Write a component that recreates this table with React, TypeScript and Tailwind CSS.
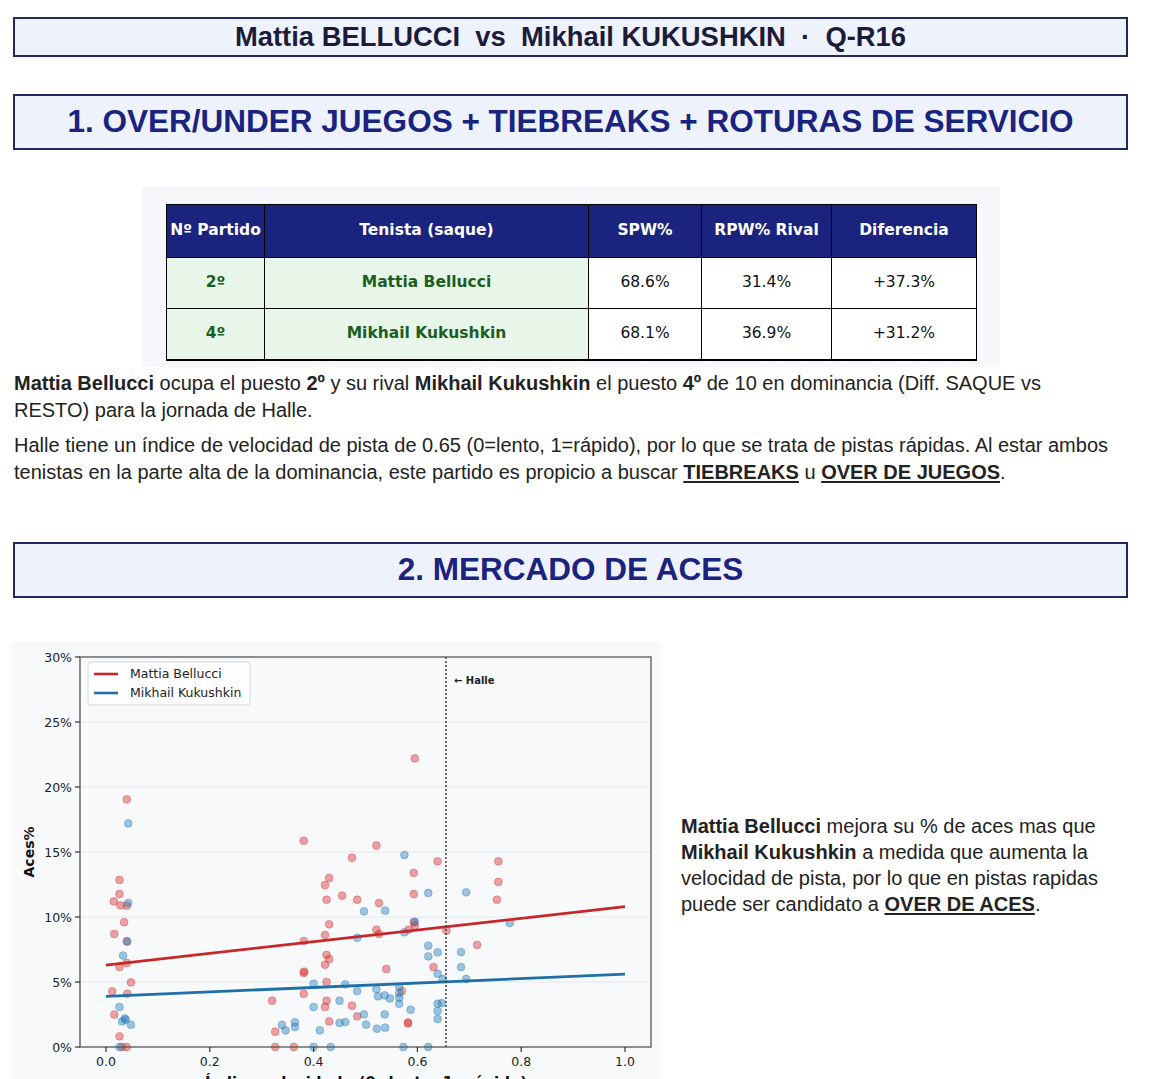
import React from "react";

const RED = "#d62728";
const BLUE = "#1f77b4";

const X = (v: number) => 94 + 519 * v;
const Y = (p: number) => 405 - 13 * p;

const redPts: [number, number][] = [
  [0.04, 19.05], [0.595, 22.2], [0.026, 12.85], [0.026, 11.77], [0.015, 11.2], [0.028, 10.9],
  [0.04, 10.87], [0.035, 9.6], [0.016, 8.7], [0.04, 8.15], [0.026, 6.15], [0.04, 6.46],
  [0.048, 4.97], [0.012, 4.28], [0.041, 4.1], [0.016, 2.49], [0.026, 0.82], [0.031, 0], [0.04, 0],
  [0.381, 15.87], [0.521, 15.5], [0.474, 14.56], [0.639, 14.28], [0.756, 14.28], [0.593, 13.4],
  [0.43, 13.0], [0.422, 12.46], [0.756, 12.7], [0.455, 11.64], [0.593, 11.77], [0.484, 11.33],
  [0.425, 11.33], [0.526, 11.08], [0.753, 11.33], [0.43, 9.44], [0.593, 9.6], [0.595, 9.33],
  [0.521, 9.03], [0.526, 8.7], [0.583, 9.03], [0.656, 8.97], [0.422, 8.62], [0.381, 8.15],
  [0.715, 7.85], [0.425, 7.08], [0.43, 6.77], [0.422, 6.33], [0.631, 6.15], [0.54, 6.0],
  [0.381, 5.7], [0.382, 5.8], [0.425, 5.0], [0.57, 4.3], [0.32, 3.56], [0.381, 4.1], [0.425, 3.56],
  [0.474, 3.18], [0.422, 3.08], [0.484, 2.36], [0.43, 1.97], [0.582, 1.8], [0.582, 1.9],
  [0.326, 1.18], [0.326, 0], [0.362, 0],
];

const bluePts: [number, number][] = [
  [0.043, 17.2], [0.043, 11.08], [0.041, 8.1], [0.033, 7.03], [0.026, 3.08], [0.036, 2.2],
  [0.038, 2.1], [0.031, 1.97], [0.048, 1.72], [0.026, 0], [0.575, 14.77], [0.621, 11.85],
  [0.694, 11.9], [0.497, 10.44], [0.538, 10.49], [0.595, 9.64], [0.575, 8.82], [0.484, 8.4],
  [0.778, 9.54], [0.621, 7.79], [0.621, 6.97], [0.639, 7.28], [0.684, 7.3], [0.684, 6.15],
  [0.639, 5.64], [0.649, 5.23], [0.694, 5.23], [0.4, 4.87], [0.461, 4.82], [0.484, 4.3],
  [0.521, 4.46], [0.565, 4.62], [0.565, 4.15], [0.524, 3.9], [0.537, 3.97], [0.547, 3.74],
  [0.565, 3.8], [0.565, 3.33], [0.639, 3.33], [0.647, 3.38], [0.4, 3.08], [0.45, 3.56],
  [0.587, 2.87], [0.639, 2.77], [0.497, 2.51], [0.537, 2.51], [0.639, 2.15], [0.364, 1.9],
  [0.339, 1.7], [0.364, 1.54], [0.346, 1.28], [0.412, 1.28], [0.45, 1.85], [0.461, 1.92],
  [0.501, 1.72], [0.522, 1.41], [0.538, 1.49], [0.4, 0], [0.433, 0], [0.573, 0], [0.621, 0],
];

function AcesChart() {
  const font = "'DejaVu Sans', sans-serif";
  return (
    <svg width="648" height="450" viewBox="0 0 648 450" className="block shrink-0" style={{ fontFamily: font }}>
      <rect x="0" y="0" width="648" height="450" fill="#f7f9fb" />
      {[5, 10, 15, 20, 25].map((p) => (
        <line key={p} x1="68" x2="639" y1={Y(p)} y2={Y(p)} stroke="#e6e9ee" strokeWidth="1.2" />
      ))}
      {redPts.map(([x, y], i) => (
        <circle key={"r" + i} cx={X(x)} cy={Y(y)} r="3.9" fill={RED} fillOpacity="0.42" stroke={RED} strokeOpacity="0.35" />
      ))}
      {bluePts.map(([x, y], i) => (
        <circle key={"b" + i} cx={X(x)} cy={Y(y)} r="3.9" fill={BLUE} fillOpacity="0.42" stroke={BLUE} strokeOpacity="0.35" />
      ))}
      <line x1={X(0)} y1={Y(6.3)} x2={X(1)} y2={Y(10.8)} stroke="#c62828" strokeWidth="2.8" />
      <line x1={X(0)} y1={Y(3.9)} x2={X(1)} y2={Y(5.6)} stroke="#1f6fa8" strokeWidth="2.8" />
      <line x1={X(0.655)} y1="15" x2={X(0.655)} y2="405" stroke="#333" strokeWidth="1.4" strokeDasharray="2 2" />
      <text x={X(0.655) + 8} y="42" fontSize="10" fontWeight="bold" fill="#222">← Halle</text>
      <rect x="68" y="15" width="571" height="390" fill="none" stroke="#555" strokeWidth="1.3" />
      {[0, 5, 10, 15, 20, 25, 30].map((p) => (
        <g key={p}>
          <line x1="63" x2="68" y1={Y(p)} y2={Y(p)} stroke="#333" strokeWidth="1.2" />
          <text x="60" y={Y(p) + 4.5} fontSize="12.5" textAnchor="end" fill="#222">{p}%</text>
        </g>
      ))}
      {[0, 0.2, 0.4, 0.6, 0.8, 1.0].map((v) => (
        <g key={v}>
          <line x1={X(v)} x2={X(v)} y1="405" y2="410" stroke="#333" strokeWidth="1.2" />
          <text x={X(v)} y="424" fontSize="12.5" textAnchor="middle" fill="#222">{v.toFixed(1)}</text>
        </g>
      ))}
      <text transform="translate(22 210) rotate(-90)" fontSize="14" fontWeight="bold" textAnchor="middle" fill="#111">Aces%</text>
      <text x="354" y="446" fontSize="15" fontWeight="bold" textAnchor="middle" fill="#111">Índice velocidad · (0=lento, 1=rápido)</text>
      <rect x="76" y="20" width="162" height="43" rx="3" fill="#ffffff" fillOpacity="0.85" stroke="#d4d7dc" />
      <line x1="82" x2="106" y1="32" y2="32" stroke="#c62828" strokeWidth="2.6" />
      <text x="118" y="36" fontSize="12.5" fill="#222">Mattia Bellucci</text>
      <line x1="82" x2="106" y1="51" y2="51" stroke="#1f6fa8" strokeWidth="2.6" />
      <text x="118" y="55" fontSize="12.5" fill="#222">Mikhail Kukushkin</text>
    </svg>
  );
}

const rows = [
  { n: "2º", name: "Mattia Bellucci", spw: "68.6%", rpw: "31.4%", diff: "+37.3%" },
  { n: "4º", name: "Mikhail Kukushkin", spw: "68.1%", rpw: "36.9%", diff: "+31.2%" },
];

function DominanceTable() {
  return (
    <div className="ml-[129px] w-[858px] bg-[#f5f7fa] pt-[17px] pb-[6px] pl-[24px]">
      <table className="border-collapse text-[15.5px] font-['DejaVu_Sans',sans-serif] border-b-2 border-black">
        <thead>
          <tr className="h-[53px] bg-[#1a237e] text-white font-bold">
            <th className="w-[98px] border border-black">Nº Partido</th>
            <th className="w-[324px] border border-black">Tenista (saque)</th>
            <th className="w-[113px] border border-black">SPW%</th>
            <th className="w-[130px] border border-black">RPW% Rival</th>
            <th className="w-[145px] border border-black">Diferencia</th>
          </tr>
        </thead>
        <tbody>
          {rows.map((r) => (
            <tr key={r.n} className="h-[51px] text-center">
              <td className="border border-black bg-[#e8f5e9] font-bold text-[#1b5e20]">{r.n}</td>
              <td className="border border-black bg-[#e8f5e9] font-bold text-[#1b5e20]">{r.name}</td>
              <td className="border border-black bg-white text-[#111]">{r.spw}</td>
              <td className="border border-black bg-white text-[#111]">{r.rpw}</td>
              <td className="border border-black bg-white text-[#111]">{r.diff}</td>
            </tr>
          ))}
        </tbody>
      </table>
    </div>
  );
}

function SectionHeader({ children }: { children: React.ReactNode }) {
  return (
    <div className="h-[56px] border-2 border-[#23285e] bg-[#eef2fd] flex items-center justify-center">
      <h2 className="text-[31.5px] font-bold text-[#1a237e] leading-none">{children}</h2>
    </div>
  );
}

export default function App() {
  return (
    <div className="w-[1159px] bg-white font-['Liberation_Sans',Arial,sans-serif] text-[#222]">
      <div className="ml-[13px] w-[1115px] pt-[17px]">
        <div className="h-[40px] border-2 border-[#23285e] bg-[#eef2fd] flex items-center justify-center">
          <h1 className="text-[27.4px] font-bold text-[#1c1c3a] leading-none whitespace-pre">
            Mattia BELLUCCI  vs  Mikhail KUKUSHKIN  ·  Q-R16
          </h1>
        </div>

        <div className="mt-[37px]">
          <SectionHeader>1. OVER/UNDER JUEGOS + TIEBREAKS + ROTURAS DE SERVICIO</SectionHeader>
        </div>

        <div className="mt-[37px]">
          <DominanceTable />
        </div>

        <div className="mt-[3px] pl-[1px] text-[20px] leading-[27px]">
          <p>
            <b>Mattia Bellucci</b> ocupa el puesto <b>2º</b> y su rival <b>Mikhail Kukushkin</b> el puesto <b>4º</b> de 10 en dominancia (Diff. SAQUE vs
            <br />
            RESTO) para la jornada de Halle.
          </p>
          <p className="mt-[8px]">
            Halle tiene un índice de velocidad de pista de 0.65 (0=lento, 1=rápido), por lo que se trata de pistas rápidas. Al estar ambos
            <br />
            tenistas en la parte alta de la dominancia, este partido es propicio a buscar{" "}
            <b className="underline underline-offset-2">TIEBREAKS</b> u{" "}
            <b className="underline underline-offset-2">OVER DE JUEGOS</b>.
          </p>
        </div>

        <div className="mt-[56px]">
          <SectionHeader>2. MERCADO DE ACES</SectionHeader>
        </div>
      </div>

      <div className="mt-[44px] ml-[12px] flex items-center gap-[21px]">
        <AcesChart />
        <p className="w-[440px] pb-[4px] text-[20px] leading-[26px]">
          <b>Mattia Bellucci</b> mejora su % de aces mas que <b>Mikhail Kukushkin</b> a medida que aumenta la velocidad de
          pista, por lo que en pistas rapidas puede ser candidato a{" "}
          <b className="underline underline-offset-2">OVER DE ACES</b>.
        </p>
      </div>
    </div>
  );
}
